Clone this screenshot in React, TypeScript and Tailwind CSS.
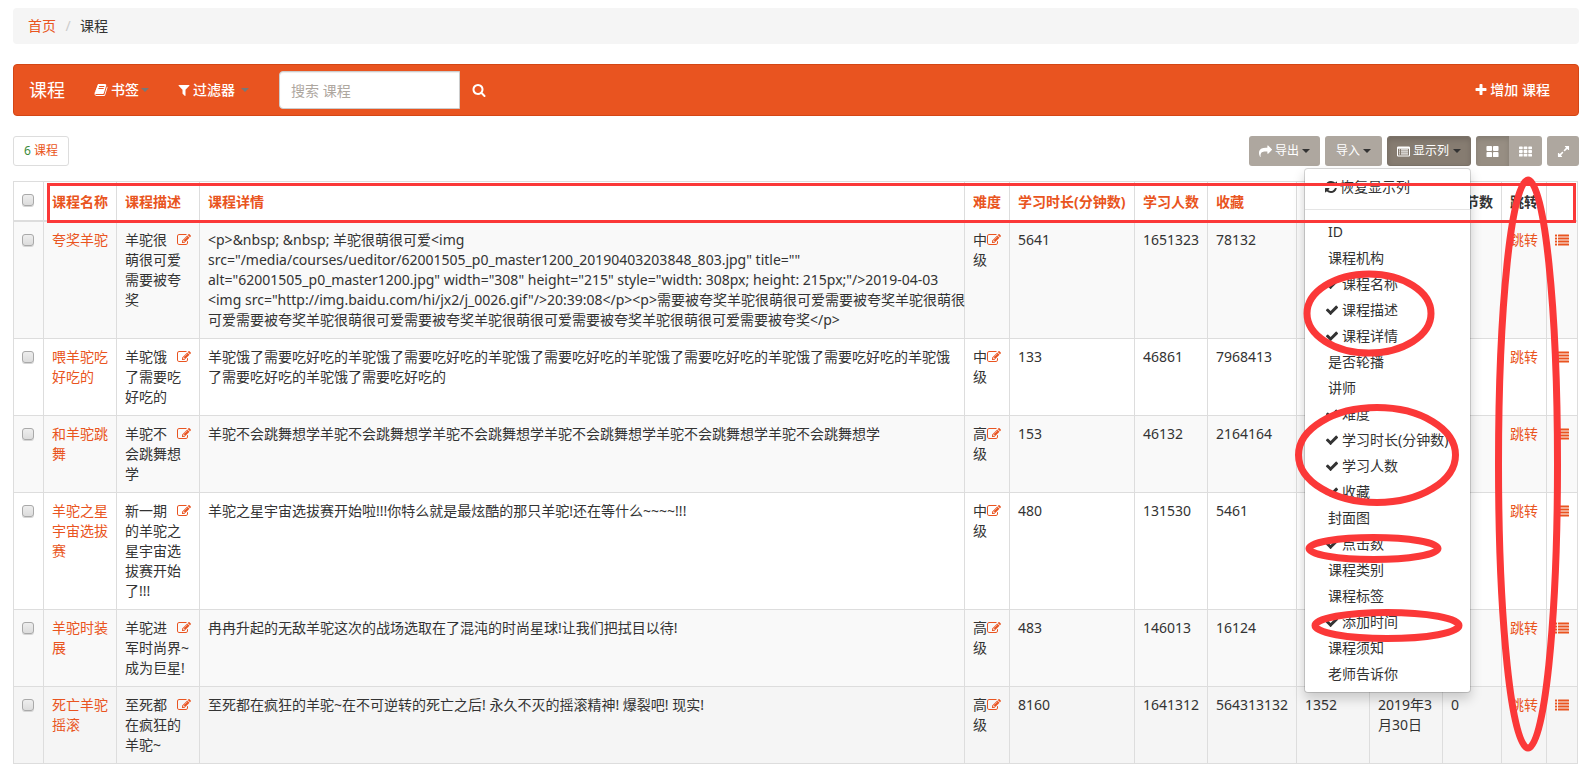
import { useState } from 'react';
import type { ReactNode } from 'react';
import clsx from 'clsx';

type IconProps = { className?: string };

function Glyph({ className, children }: { className?: string; children: ReactNode }) {
  return (
    <svg viewBox="0 0 1792 1792" fill="currentColor" aria-hidden="true" className={clsx('shrink-0', className)}>
      {children}
    </svg>
  );
}

const PATHS = {
  book: 'M1703 478q40 57 18 129l-275 906q-19 64-76.5 107.5t-122.5 43.5h-923q-77 0-148.5-53.5t-99.5-131.5q-24-67-2-127 0-4 3-27t4-37q1-8-3-21.5t-3-19.5q2-11 8-21t16.5-23.5 16.5-23.5q23-38 45-91.5t30-91.5q3-10 .5-30t-.5-28q3-11 17-28t17-23q21-36 42-92t25-90q1-9-2.5-32t.5-28q4-13 22-30.5t22-22.5q19-26 42.5-84.5t27.5-96.5q1-8-3-25.5t-2-26.5q2-8 9-18t18-23 17-21q8-12 16.5-30.5t15-35 16-36 19.5-32 26.5-23.5 36-11.5 47.5 5.5l-1 3q38-9 51-9h761q74 0 114 56t18 130l-274 906q-36 119-71.5 153.5t-128.5 34.5h-869q-27 0-38 15-11 16-1 43 24 70 144 70h923q29 0 56-15.5t35-41.5l300-987q7-22 5-57 38 15 59 43zm-1064 2q-4 13 2 22.5t20 9.5h608q13 0 25.5-9.5t16.5-22.5l21-64q4-13-2-22.5t-20-9.5h-608q-13 0-25.5 9.5t-16.5 22.5zm-83 256q-4 13 2 22.5t20 9.5h608q13 0 25.5-9.5t16.5-22.5l21-64q4-13-2-22.5t-20-9.5h-608q-13 0-25.5 9.5t-16.5 22.5z',
  filter: 'M1595 295q17 41-14 70l-493 493v742q0 42-39 59-13 5-25 5-27 0-45-19l-256-256q-19-19-19-45v-486l-493-493q-31-29-14-70 17-39 59-39h1280q42 0 59 39z',
  search: 'M1216 832q0-185-131.5-316.5t-316.5-131.5-316.5 131.5-131.5 316.5 131.5 316.5 316.5 131.5 316.5-131.5 131.5-316.5zm512 832q0 52-38 90t-90 38q-54 0-90-38l-343-342q-179 124-399 124-143 0-273.5-55.5t-225-150-150-225-55.5-273.5 55.5-273.5 150-225 225-150 273.5-55.5 273.5 55.5 225 150 150 225 55.5 273.5q0 220-124 399l343 343q37 37 37 90z',
  edit: 'M888 1184l116-116-152-152-116 116v56h96v96h56zm440-720q-16-16-33 1l-350 350q-17 17-1 33t33-1l350-350q17-17 1-33zm80 594v190q0 119-84.5 203.5t-203.5 84.5h-832q-119 0-203.5-84.5t-84.5-203.5v-832q0-119 84.5-203.5t203.5-84.5h832q63 0 117 25 15 7 18 23 3 17-9 29l-49 49q-14 14-32 8-23-6-45-6h-832q-66 0-113 47t-47 113v832q0 66 47 113t113 47h832q66 0 113-47t47-113v-126q0-13 9-22l64-64q15-15 35-7t20 29zm-96-738l288 288-672 672h-288v-288zm444 132l-92 92-288-288 92-92q28-28 68-28t68 28l152 152q28 28 28 68t-28 68z',
  plus: 'M1600 736v192q0 40-28 68t-68 28h-416v416q0 40-28 68t-68 28h-192q-40 0-68-28t-28-68v-416h-416q-40 0-68-28t-28-68v-192q0-40 28-68t68-28h416v-416q0-40 28-68t68-28h192q40 0 68 28t28 68v416h416q40 0 68 28t28 68z',
  check: 'M1671 566q0 40-28 68l-724 724-136 136q-28 28-68 28t-68-28l-136-136-362-362q-28-28-28-68t28-68l136-136q28-28 68-28t68 28l294 295 656-657q28-28 68-28t68 28l136 136q28 28 28 68z',
  refresh: 'M1639 1056q0 5-1 7-64 268-268 434.5t-478 166.5q-146 0-282.5-55t-243.5-157l-129 129q-19 19-45 19t-45-19-19-45v-448q0-26 19-45t45-19h448q26 0 45 19t19 45-19 45l-137 137q71 66 161 102t187 36q134 0 250-65t186-179q11-17 53-117 8-23 30-23h192q13 0 22.5 9.5t9.5 22.5zm25-800v448q0 26-19 45t-45 19h-448q-26 0-45-19t-19-45 19-45l138-138q-148-137-349-137-134 0-250 65t-186 179q-11 17-53 117-8 23-30 23h-199q-13 0-22.5-9.5t-9.5-22.5v-7q65-268 270-434.5t480-166.5q146 0 284 55.5t245 156.5l130-129q19-19 45-19t45 19 19 45z',
  share: 'M1792 640q0 26-19 45l-512 512q-19 19-45 19t-45-19-19-45v-256h-224q-98 0-175.5 6t-154 21.5-133 42.5-105.5 69.5-80 101-48.5 138.5-17.5 181q0 55 5 123 0 6 2.5 23.5t2.5 26.5q0 15-8.5 25t-23.5 10q-16 0-28-17-7-9-13-22t-13.5-30-10.5-24q-127-285-127-451 0-199 53-333 162-403 875-403h224v-256q0-26 19-45t45-19 45 19l512 512q19 19 19 45z',
  expand: 'M883 1056q0 13-10 23l-332 332 144 144q19 19 19 45t-19 45-45 19h-448q-26 0-45-19t-19-45v-448q0-26 19-45t45-19 45 19l144 144 332-332q10-10 23-10t23 10l114 114q10 10 10 23zm781-864v448q0 26-19 45t-45 19-45-19l-144-144-332 332q-10 10-23 10t-23-10l-114-114q-10-10-10-23t10-23l332-332-144-144q-19-19-19-45t19-45 45-19h448q26 0 45 19t19 45z',
};

function Icon({ name, className }: { name: keyof typeof PATHS; className?: string }) {
  return (
    <Glyph className={className}>
      <path d={PATHS[name]} />
    </Glyph>
  );
}

const ThLarge = ({ className }: IconProps) => (
  <Glyph className={className}>
    {[128, 960].map((y) =>
      [64, 960].map((x) => <rect key={`${x}-${y}`} x={x} y={y} width="768" height="704" rx="128" />),
    )}
  </Glyph>
);

const Th = ({ className }: IconProps) => (
  <Glyph className={className}>
    {[192, 704, 1216].map((y) =>
      [0, 640, 1280].map((x) => <rect key={`${x}-${y}`} x={x} y={y} width="512" height="384" rx="96" />),
    )}
  </Glyph>
);

const ListIcon = ({ className }: IconProps) => (
  <Glyph className={className}>
    {[192, 576, 960, 1344].map((y) => (
      <g key={y}>
        <rect x="0" y={y} width="256" height="256" rx="32" />
        <rect x="384" y={y} width="1408" height="256" rx="32" />
      </g>
    ))}
  </Glyph>
);

const ListAlt = ({ className }: IconProps) => (
  <Glyph className={className}>
    <path
      fillRule="evenodd"
      d="M160 192h1472q160 0 160 160v1088q0 160-160 160H160Q0 1600 0 1440V352Q0 192 160 192zM138 500v900q0 64 64 64h1388q64 0 64-64V500z"
    />
    {[600, 876, 1152].map((y) => (
      <g key={y}>
        <rect x="276" y={y} width="138" height="150" />
        <rect x="552" y={y} width="966" height="150" />
      </g>
    ))}
  </Glyph>
);

const Caret = ({ className }: IconProps) => (
  <span
    className={clsx('inline-block w-0 h-0 border-x-4 border-x-transparent border-t-4', className)}
    aria-hidden="true"
  />
);

const COLUMN_OPTIONS = [
  { label: 'ID', checked: false },
  { label: '课程机构', checked: false },
  { label: '课程名称', checked: true },
  { label: '课程描述', checked: true },
  { label: '课程详情', checked: true },
  { label: '是否轮播', checked: false },
  { label: '讲师', checked: false },
  { label: '难度', checked: true },
  { label: '学习时长(分钟数)', checked: true },
  { label: '学习人数', checked: true },
  { label: '收藏', checked: true },
  { label: '封面图', checked: false },
  { label: '点击数', checked: true },
  { label: '课程类别', checked: false },
  { label: '课程标签', checked: false },
  { label: '添加时间', checked: true },
  { label: '课程须知', checked: false },
  { label: '老师告诉你', checked: false },
];

const COURSES = [
  {
    name: '夸奖羊驼',
    desc: '羊驼很萌很可爱需要被夸奖',
    detail: [
      '<p>&nbsp; &nbsp; 羊驼很萌很可爱<img',
      'src="/media/courses/ueditor/62001505_p0_master1200_20190403203848_803.jpg" title=""',
      'alt="62001505_p0_master1200.jpg" width="308" height="215" style="width: 308px; height: 215px;"/>2019-04-03',
      '<img src="http://img.baidu.com/hi/jx2/j_0026.gif"/>20:39:08</p><p>需要被夸奖羊驼很萌很可爱需要被夸奖羊驼很萌很',
      '可爱需要被夸奖羊驼很萌很可爱需要被夸奖羊驼很萌很可爱需要被夸奖羊驼很萌很可爱需要被夸奖</p>',
    ],
    level: '中级', minutes: '5641', students: '1651323', favs: '78132', clicks: '', added: '', chapters: '',
  },
  {
    name: '喂羊驼吃好吃的',
    desc: '羊驼饿了需要吃好吃的',
    detail: ['羊驼饿了需要吃好吃的羊驼饿了需要吃好吃的羊驼饿了需要吃好吃的羊驼饿了需要吃好吃的羊驼饿了需要吃好吃的羊驼饿了需要吃好吃的羊驼饿了需要吃好吃的'],
    level: '中级', minutes: '133', students: '46861', favs: '7968413', clicks: '', added: '', chapters: '',
  },
  {
    name: '和羊驼跳舞',
    desc: '羊驼不会跳舞想学',
    detail: ['羊驼不会跳舞想学羊驼不会跳舞想学羊驼不会跳舞想学羊驼不会跳舞想学羊驼不会跳舞想学羊驼不会跳舞想学'],
    level: '高级', minutes: '153', students: '46132', favs: '2164164', clicks: '', added: '', chapters: '',
  },
  {
    name: '羊驼之星宇宙选拔赛',
    desc: '新一期的羊驼之星宇宙选拔赛开始了!!!',
    detail: ['羊驼之星宇宙选拔赛开始啦!!!你特么就是最炫酷的那只羊驼!还在等什么~~~~!!!'],
    level: '中级', minutes: '480', students: '131530', favs: '5461', clicks: '', added: '', chapters: '',
  },
  {
    name: '羊驼时装展',
    desc: '羊驼进军时尚界~成为巨星!',
    detail: ['冉冉升起的无敌羊驼这次的战场选取在了混沌的时尚星球!让我们把拭目以待!'],
    level: '高级', minutes: '483', students: '146013', favs: '16124', clicks: '', added: '', chapters: '',
  },
  {
    name: '死亡羊驼摇滚',
    desc: '至死都在疯狂的羊驼~',
    detail: ['至死都在疯狂的羊驼~在不可逆转的死亡之后! 永久不灭的摇滚精神! 爆裂吧! 现实!'],
    level: '高级', minutes: '8160', students: '1641312', favs: '564313132', clicks: '1352', added: '2019年3月30日', chapters: '0',
  },
];

const SORTABLE = ['课程名称', '课程描述', '课程详情', '难度', '学习时长(分钟数)', '学习人数', '收藏'];
const PLAIN = ['', '', '章节数', '跳转', ''];

const cell = 'border border-[#ddd] p-2 align-top text-left';
const headCell = 'border border-b-2 border-[#ddd] px-2 pt-2.5 pb-2 align-top text-left';
const toolBtn = 'flex items-center h-[30px] rounded-[3px] text-xs text-white bg-[#aea79f]';

function RowCheckbox({ label }: { label: string }) {
  return (
    <input
      type="checkbox"
      aria-label={label}
      className="block mt-1 size-3 appearance-none rounded-[3px] border border-[#a9a9a9] bg-linear-to-b from-[#eee] to-[#dcdcdc] shadow-[0_1px_0_#d5d5d5] checked:bg-[#e95420]"
    />
  );
}

function EditLink({ label }: { label: string }) {
  return (
    <a href="#edit" aria-label={label} className="float-right pt-[3px] text-[#e95420]">
      <Icon name="edit" className="size-3.5" />
    </a>
  );
}

function ColumnMenu() {
  return (
    <div
      role="menu"
      className="absolute right-0 top-full z-10 mt-[2px] w-[167px] rounded border border-black/15 bg-white bg-clip-padding py-[5px] text-sm leading-5 text-[#333] shadow-[0_6px_12px_rgba(0,0,0,0.175)]"
    >
      <button role="menuitem" className="flex h-[26px] w-full items-center gap-0.5 px-[19px]">
        <Icon name="refresh" className="size-3.5" />
        恢复显示列
      </button>
      <div className="my-[9px] h-px bg-[#e5e5e5]" />
      {COLUMN_OPTIONS.map((o) => (
        <button
          key={o.label}
          role="menuitemcheckbox"
          aria-checked={o.checked}
          className={clsx('flex h-[26px] w-full items-center gap-[3px] whitespace-nowrap', o.checked ? 'pl-5' : 'pl-[23px]')}
        >
          {o.checked && <Icon name="check" className="size-3.5" />}
          {o.label}
        </button>
      ))}
    </div>
  );
}

// Hand-drawn style marks circling the parts being discussed
function Annotations() {
  return (
    <svg
      className="pointer-events-none absolute right-0 top-0 z-20 h-[780px] w-[310px]"
      viewBox="1280 0 310 780"
      fill="none"
      stroke="#fb3838"
      strokeWidth="7"
      aria-hidden="true"
    >
      <ellipse cx="1369" cy="313.5" rx="62" ry="39.5" />
      <ellipse cx="1377" cy="455" rx="78.5" ry="47.5" />
      <ellipse cx="1373.5" cy="548.5" rx="64.5" ry="11" />
      <ellipse cx="1387" cy="625.5" rx="72" ry="13" />
      <ellipse cx="1528" cy="464" rx="29.5" ry="284" />
    </svg>
  );
}

export default function App() {
  const [menuOpen, setMenuOpen] = useState(true);
  const [query, setQuery] = useState('');

  return (
    <div className="relative bg-white pt-2 pb-4 pl-[13px] pr-[11px] font-['Noto_Sans','Noto_Sans_CJK_SC',sans-serif] text-sm leading-5 text-[#333]">
      <nav aria-label="breadcrumb" className="flex rounded bg-[#f5f5f5] px-[15px] py-2">
        <a href="#home" className="text-[#e95420]">首页</a>
        <span className="w-6 text-center text-[#ccc]">/</span>
        <span>课程</span>
      </nav>

      <header className="mt-5 flex h-[52px] items-center rounded border border-[#d34615] bg-[#e95420] pl-[15px] pr-7 text-white">
        <a href="#courses" className="text-lg">课程</a>
        <button className="ml-[29px] flex items-center font-medium">
          <Icon name="book" className="mr-[3px] size-3.5" />
          书签
          <Caret className="ml-0.5 border-t-[#777]" />
        </button>
        <button className="ml-7 flex items-center font-medium">
          <Icon name="filter" className="mr-0.5 size-3.5" />
          过滤器
          <Caret className="ml-1.5 border-t-[#777]" />
        </button>
        <form className="ml-[30px] flex items-center" onSubmit={(e) => e.preventDefault()}>
          <input
            value={query}
            onChange={(e) => setQuery(e.target.value)}
            placeholder="搜索 课程"
            aria-label="搜索 课程"
            className="h-[38px] w-[181px] rounded-l border border-[#ccc] bg-white px-[11px] text-[#333] shadow-[inset_0_1px_1px_rgba(0,0,0,0.075)] placeholder:text-[#aea79f]"
          />
          <button className="px-3" aria-label="搜索">
            <Icon name="search" className="size-3.5" />
          </button>
        </form>
        <a href="#add" className="ml-auto flex items-center gap-0.5 font-medium">
          <Icon name="plus" className="size-3.5" />
          增加 课程
        </a>
      </header>

      <div className="mt-5 flex items-center gap-[5px]">
        <button className="mr-auto flex h-[30px] items-center gap-[3px] rounded-[3px] border border-[#ddd] px-2.5 text-xs text-[#e95420]">
          <span className="text-[#3c8b3c]">6</span>课程
        </button>
        <button className={clsx(toolBtn, 'px-2.5')}>
          <Icon name="share" className="mr-[3px] size-[13px]" />
          导出
          <Caret className="ml-[3px] border-t-[#333]" />
        </button>
        <button className={clsx(toolBtn, 'px-[11px]')}>
          导入
          <Caret className="ml-[3px] border-t-[#333]" />
        </button>
        <div className="relative">
          <button
            aria-expanded={menuOpen}
            onClick={() => setMenuOpen((o) => !o)}
            className="flex h-[30px] items-center rounded-[3px] border border-[#7b7268] bg-[#867c71] px-[9px] text-xs text-white shadow-[inset_0_3px_5px_rgba(0,0,0,0.125)]"
          >
            <ListAlt className="mr-[3px] size-[13px]" />
            显示列
            <Caret className="ml-1 border-t-[#333]" />
          </button>
          {menuOpen && <ColumnMenu />}
        </div>
        <div className="flex">
          <button
            aria-label="大图标"
            className="flex h-[30px] w-[33px] items-center justify-center rounded-l-[3px] bg-[#978e83] text-white shadow-[inset_0_3px_5px_rgba(0,0,0,0.125)]"
          >
            <ThLarge className="size-[13px]" />
          </button>
          <button aria-label="小图标" className="flex h-[30px] w-[33px] items-center justify-center rounded-r-[3px] bg-[#aea79f] text-white">
            <Th className="size-[13px]" />
          </button>
        </div>
        <button aria-label="全屏" className="flex h-[30px] w-8 items-center justify-center rounded-[3px] bg-[#aea79f] text-white">
          <Icon name="expand" className="size-[13px]" />
        </button>
      </div>

      <div className="relative mt-[15px] pr-px">
        <table className="w-full table-fixed border-collapse">
          <colgroup>
            <col className="w-[30px]" />
            <col className="w-[73px]" />
            <col className="w-[83px]" />
            <col />
            <col className="w-[45px]" />
            <col className="w-[125px]" />
            <col className="w-[73px]" />
            <col className="w-[89px]" />
            <col className="w-[73px]" />
            <col className="w-[73px]" />
            <col className="w-[59px]" />
            <col className="w-[45px]" />
            <col className="w-[31px]" />
          </colgroup>
          <thead>
            <tr className="whitespace-nowrap">
              <th className={clsx(cell, 'border-b-2')}>
                <RowCheckbox label="全选" />
              </th>
              {SORTABLE.map((h) => (
                <th key={h} className={headCell}>
                  <a href="#sort" className="text-[#e95420]">{h}</a>
                </th>
              ))}
              {PLAIN.map((h, i) => (
                <th key={i} className={headCell}>{h}</th>
              ))}
            </tr>
          </thead>
          <tbody>
            {COURSES.map((c) => (
              <tr key={c.name} className="odd:bg-[#f9f9f9] last:bg-[#f5f5f5]">
                <td className={cell}>
                  <RowCheckbox label={c.name} />
                </td>
                <td className={cell}>
                  <a href="#course" className="text-[#e95420]">{c.name}</a>
                </td>
                <td className={cell}>
                  <EditLink label="编辑课程描述" />
                  {c.desc}
                </td>
                <td className={clsx(cell, c.detail.length > 1 && 'whitespace-nowrap')}>
                  {c.detail.map((line) => (
                    <div key={line}>{line}</div>
                  ))}
                </td>
                <td className={cell}>
                  <EditLink label="编辑难度" />
                  {c.level}
                </td>
                <td className={cell}>{c.minutes}</td>
                <td className={cell}>{c.students}</td>
                <td className={cell}>{c.favs}</td>
                <td className={cell}>{c.clicks}</td>
                <td className={cell}>{c.added}</td>
                <td className={cell}>{c.chapters}</td>
                <td className={cell}>
                  <a href="#jump" className="text-[#e95420]">跳转</a>
                </td>
                <td className={cell}>
                  <a href="#detail" aria-label="详情" className="block pt-[3px] text-[#e95420]">
                    <ListIcon className="size-3.5" />
                  </a>
                </td>
              </tr>
            ))}
          </tbody>
        </table>
        <div className="pointer-events-none absolute left-[34px] right-[3px] top-[2px] z-20 h-10 border-3 border-[#fb3838]" />
      </div>

      <Annotations />
    </div>
  );
}
